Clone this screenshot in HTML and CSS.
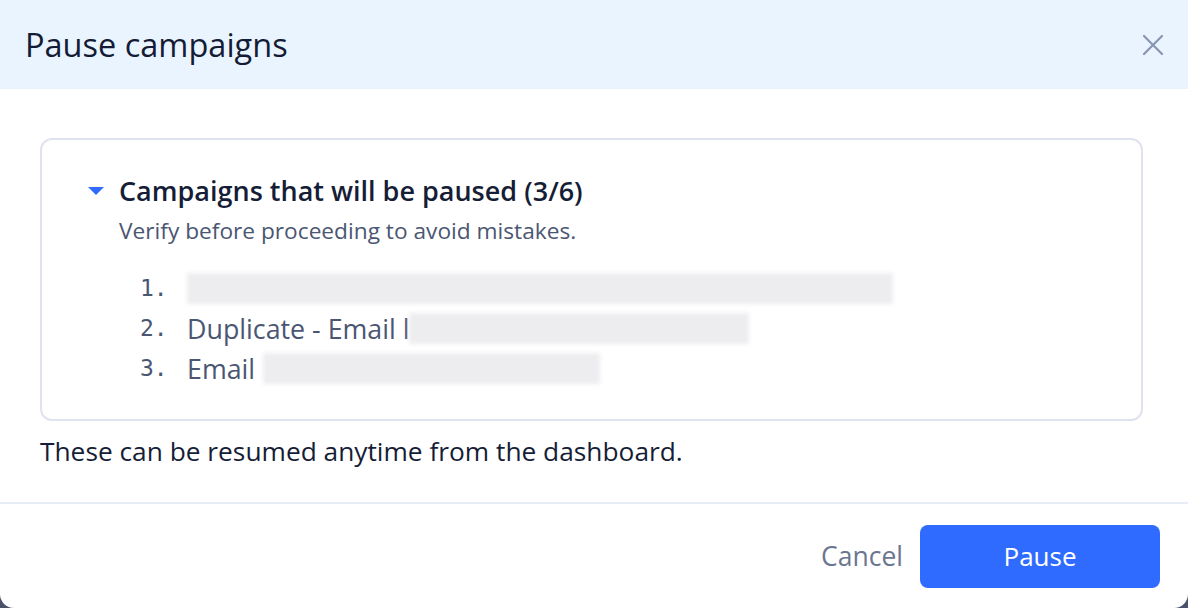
FILE: index.html
```html
<!DOCTYPE html>
<html lang="en">
<head>
    <meta charset="UTF-8">
    <title>Pause campaigns</title>
    <link rel="stylesheet" href="styles.css">
</head>
<body>
    <div class="modal">
        <header class="modal-header">
            <h1>Pause campaigns</h1>
            <button class="close-btn" aria-label="Close">
                <svg width="22" height="22" viewBox="0 0 22 22">
                    <path d="M2 2 L20 20 M20 2 L2 20" stroke="#8795b2" stroke-width="2.2" stroke-linecap="round" fill="none"/>
                </svg>
            </button>
        </header>

        <div class="modal-body">
            <div class="campaign-box">
                <div class="box-title">
                    <span class="caret"></span>
                    <h2>Campaigns that will be paused (3/6)</h2>
                </div>
                <p class="hint">Verify before proceeding to avoid mistakes.</p>
                <ol class="campaign-list">
                    <li><span class="num">1.</span><span class="redacted first" style="width: 706px"></span></li>
                    <li><span class="num">2.</span>Duplicate - Email l<span class="redacted tight" style="width: 340px"></span></li>
                    <li><span class="num">3.</span>Email <span class="redacted" style="width: 337px"></span></li>
                </ol>
            </div>
            <p class="note">These can be resumed anytime from the dashboard.</p>
        </div>

        <footer class="modal-footer">
            <button class="btn-cancel">Cancel</button>
            <button class="btn-primary">Pause</button>
        </footer>
    </div>
</body>
</html>
```

FILE: styles.css
```css
* {
    box-sizing: border-box;
}

body {
    margin: 0;
    background-color: #4b5168;
    font-family: "Open Sans", "Liberation Sans", sans-serif;
    color: #161d36;
}

.modal {
    width: 1188px;
    height: 608px;
    background-color: #fff;
    border-radius: 0 0 14px 14px;
    display: flex;
    flex-direction: column;
    overflow: hidden;
}

.modal-header {
    height: 89px;
    flex-shrink: 0;
    background-color: #eaf4ff;
    display: flex;
    align-items: center;
    justify-content: space-between;
    padding: 0 24px 0 25px;
}

.modal-header h1 {
    margin: 0;
    font-size: 32.5px;
    font-weight: 400;
    color: #141b34;
}

.close-btn {
    border: none;
    background: none;
    padding: 0;
    width: 22px;
    height: 22px;
    cursor: pointer;
}

.modal-body {
    flex: 1;
    padding: 49px 45px 0 40px;
}

.campaign-box {
    height: 283px;
    border: 2px solid #dfe3ed;
    border-radius: 12px;
    padding: 32px 46px 0 46px;
}

.box-title {
    display: flex;
    align-items: center;
    gap: 15px;
}

.caret {
    width: 0;
    height: 0;
    border-left: 8px solid transparent;
    border-right: 8px solid transparent;
    border-top: 8px solid #2f6bff;
}

.box-title h2 {
    margin: 0;
    font-size: 27px;
    font-weight: 600;
    color: #161d36;
}

.hint {
    margin: 6px 0 0 31px;
    font-size: 22.7px;
    color: #4b5672;
}

.campaign-list {
    list-style: none;
    margin: 22px 0 0 52px;
    padding: 0;
}

.campaign-list li {
    display: flex;
    align-items: center;
    height: 40px;
    font-size: 26.8px;
    color: #4b5672;
}

.num {
    width: 47px;
    font-family: "DejaVu Sans Mono", monospace;
    font-size: 23px;
}

/* hidden campaign names */
.redacted {
    display: inline-block;
    height: 31px;
    margin-left: 8px;
    background-color: #ededf0;
    filter: blur(2px);
}

.redacted.first {
    margin-left: 0;
}

.redacted.tight {
    margin-left: -1px;
}

.note {
    margin: 12px 0 0 0;
    font-size: 26.3px;
    color: #161d36;
}

.modal-footer {
    height: 106px;
    flex-shrink: 0;
    border-top: 2px solid #e7ecf6;
    display: flex;
    align-items: center;
    justify-content: flex-end;
    gap: 17px;
    padding: 0 28px 0 0;
}

.btn-cancel {
    border: none;
    background: none;
    font-family: inherit;
    font-size: 26.5px;
    color: #6b7690;
    padding: 0;
    cursor: pointer;
}

.btn-primary {
    width: 240px;
    height: 63px;
    border: none;
    border-radius: 8px;
    background-color: #2f6bff;
    color: #fff;
    font-family: inherit;
    font-size: 26px;
    cursor: pointer;
}
```
